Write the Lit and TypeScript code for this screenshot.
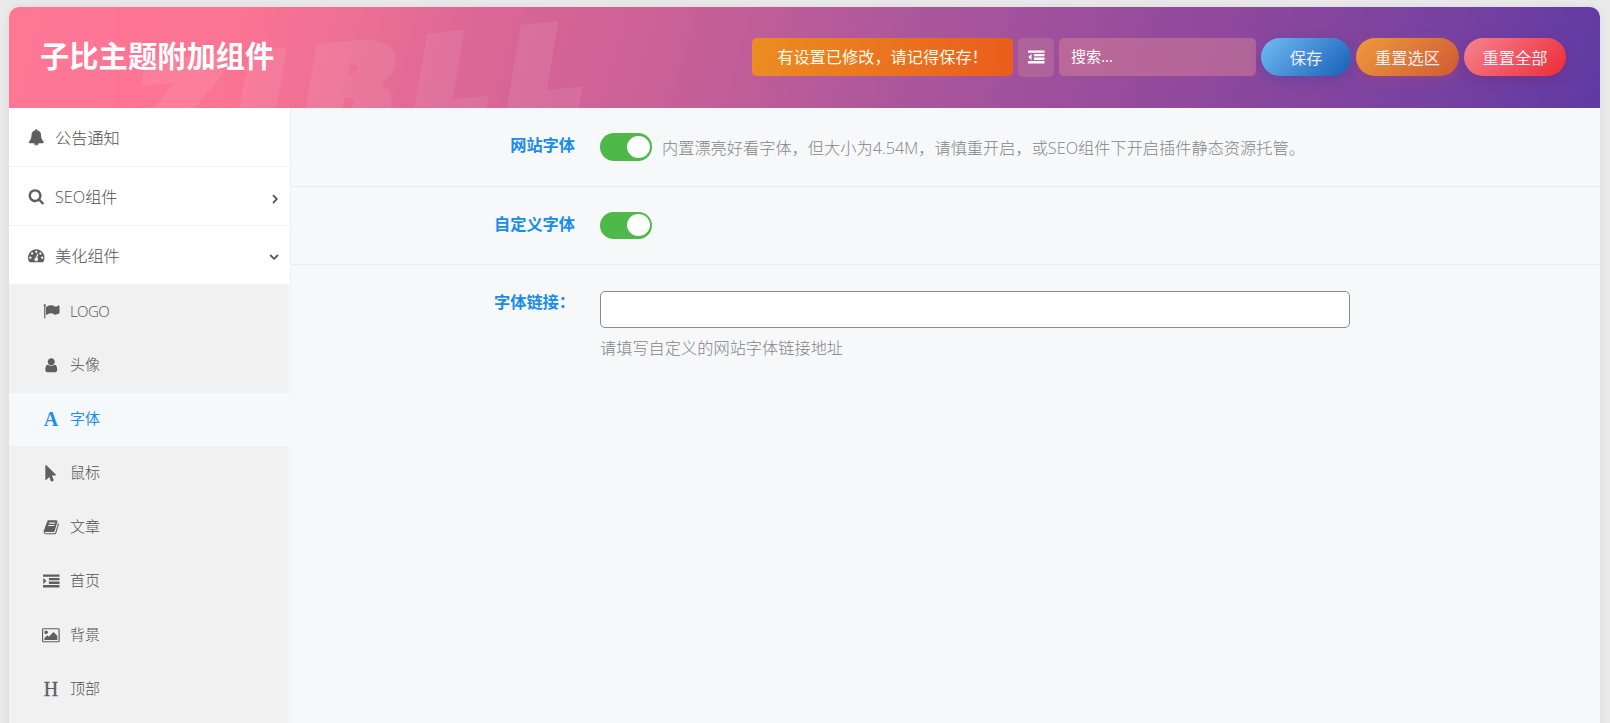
import { LitElement, html, svg, css, nothing } from "lit";
import { customElement, property } from "lit/decorators.js";

const paths: Record<string, string> = {
  bell: "M912 1696q0-16-16-16-59 0-101.5-42.5t-42.5-101.5q0-16-16-16t-16 16q0 73 51.5 124.5t124.5 51.5q16 0 16-16zm816-288q0 52-38 90t-90 38h-448q0 106-75 181t-181 75-181-75-75-181h-448q-52 0-90-38t-38-90q50-42 91-88t85-119.5 74.5-158.5 50-206 19.5-260q0-152 117-282.5t307-158.5q-8-19-8-39 0-40 28-68t68-28 68 28 28 68q0 20-8 39 190 28 307 158.5t117 282.5q0 139 19.5 260t50 206 74.5 158.5 85 119.5 91 88z",
  search: "M1216 832q0-185-131.5-316.5t-316.5-131.5-316.5 131.5-131.5 316.5 131.5 316.5 316.5 131.5 316.5-131.5 131.5-316.5zm512 832q0 52-38 90t-90 38q-54 0-90-38l-343-342q-179 124-399 124-143 0-273.5-55.5t-225-150-150-225-55.5-273.5 55.5-273.5 150-225 225-150 273.5-55.5 273.5 55.5 225 150 150 225 55.5 273.5q0 220-124 399l343 343q37 37 37 90z",
  gauge: "M384 1152q0-53-37.5-90.5t-90.5-37.5-90.5 37.5-37.5 90.5 37.5 90.5 90.5 37.5 90.5-37.5 37.5-90.5zm192-448q0-53-37.5-90.5t-90.5-37.5-90.5 37.5-37.5 90.5 37.5 90.5 90.5 37.5 90.5-37.5 37.5-90.5zm428 481l101-382q6-26-7.5-48.5t-38.5-29.5-48 6.5-30 39.5l-101 382q-60 5-107 43.5t-63 98.5q-20 77 20 146t117 89 146-20 89-117q16-60-6-117t-72-91zm660-33q0-53-37.5-90.5t-90.5-37.5-90.5 37.5-37.5 90.5 37.5 90.5 90.5 37.5 90.5-37.5 37.5-90.5zm-640-640q0-53-37.5-90.5t-90.5-37.5-90.5 37.5-37.5 90.5 37.5 90.5 90.5 37.5 90.5-37.5 37.5-90.5zm448 192q0-53-37.5-90.5t-90.5-37.5-90.5 37.5-37.5 90.5 37.5 90.5 90.5 37.5 90.5-37.5 37.5-90.5zm320 448q0 261-141 483-19 29-54 29h-1402q-35 0-54-29-141-221-141-483 0-182 71-348t191-286 286-191 348-71 348 71 286 191 191 286 71 348z",
  flag: "M320 256q0 72-64 110v1266q0 13-9.5 22.5t-22.5 9.5h-64q-13 0-22.5-9.5t-9.5-22.5v-1266q-64-38-64-110 0-53 37.5-90.5t90.5-37.5 90.5 37.5 37.5 90.5zm1472 64v763q0 25-12.5 38.5t-39.5 27.5q-215 116-369 116-61 0-123.5-22t-108.5-48-115.5-48-142.5-22q-192 0-464 146-17 9-33 9-26 0-45-19t-19-45v-742q0-32 31-55 21-14 79-43 236-120 421-120 107 0 200 29t219 88q38 19 88 19 54 0 117.5-21t110-47 88-47 54.5-21q26 0 45 19t19 45z",
  user: "M1536 1399q0 109-62.5 187t-150.5 78h-854q-88 0-150.5-78t-62.5-187q0-85 8.5-160.5t31.5-152 58.5-131 94-89 134.5-34.5q131 128 313 128t313-128q76 0 134.5 34.5t94 89 58.5 131 31.5 152 8.5 160.5zm-256-887q0 159-112.5 271.5t-271.5 112.5-271.5-112.5-112.5-271.5 112.5-271.5 271.5-112.5 271.5 112.5 112.5 271.5z",
  pointer: "M1389 1043q31 30 14 69-17 40-59 40h-382l201 476q10 25 0 49t-34 35l-177 75q-25 10-49 0t-35-34l-191-452-312 312q-19 19-45 19-12 0-24-5-40-17-40-59v-1504q0-42 40-59 12-5 24-5 27 0 45 19z",
  book: "M1703 478q40 57 18 129l-275 906q-19 64-76.5 107.5t-122.5 43.5h-923q-77 0-148.5-53.5t-99.5-131.5q-24-67-2-127 0-4 3-27t4-37q1-8-3-21.5t-3-19.5q2-11 8-21t16.5-23.5 16.5-23.5q23-38 45-91.5t30-91.5q3-10 .5-30t-.5-28q3-11 17-28t17-23q21-36 42-92t25-90q1-9-2.5-32t.5-28q4-13 22-30.5t22-22.5q19-26 42.5-84.5t27.5-96.5q1-8-3-25.5t-2-26.5q2-8 9-18t18-23 17-21q8-12 16.5-30.5t15-35 16-36 19.5-32 26.5-23.5 36-11.5 47.5 5.5l-1 3q38-9 51-9h761q74 0 114 56t18 130l-274 906q-36 119-71.5 153.5t-128.5 34.5h-869q-27 0-38 15-11 16-1 43 24 70 144 70h923q29 0 56-15.5t35-41.5l300-987q7-22 5-57 38 15 59 43zm-1064 2q-4 13 2 22.5t20 9.5h608q13 0 25.5-9.5t16.5-22.5l21-64q4-13-2-22.5t-20-9.5h-608q-13 0-25.5 9.5t-16.5 22.5zm-83 256q-4 13 2 22.5t20 9.5h608q13 0 25.5-9.5t16.5-22.5l21-64q4-13-2-22.5t-20-9.5h-608q-13 0-25.5 9.5t-16.5 22.5z",
  indent: "M0 160h1792v256h-1792zM640 544h1152v256h-1152zM640 928h1152v256h-1152zM0 1312h1792v256h-1792zM32 544l352 320-352 320z",
  outdent: "M0 160h1792v256h-1792zM640 544h1152v256h-1152zM640 928h1152v256h-1152zM0 1312h1792v256h-1792zM384 512v704l-352-352z",
  image: "M576 576q0 80-56 136t-136 56-136-56-56-136 56-136 136-56 136 56 56 136zm1024 384v448h-1408v-192l320-320 160 160 512-512zm96-704h-1600q-13 0-22.5 9.5t-9.5 22.5v1216q0 13 9.5 22.5t22.5 9.5h1600q13 0 22.5-9.5t9.5-22.5v-1216q0-13-9.5-22.5t-22.5-9.5zm160 32v1216q0 66-47 113t-113 47h-1600q-66 0-113-47t-47-113v-1216q0-66 47-113t113-47h1600q66 0 113 47t47 113z",
};

@customElement("fa-icon")
class FaIcon extends LitElement {
  @property() name = "";
  static styles = css`
    :host { display: flex; align-items: center; justify-content: center; width: 18px; height: 18px; }
    svg { display: block; height: 16.5px; overflow: visible; fill: currentColor; }
    .letter { font: 20px/16px "Liberation Serif", serif; -webkit-text-stroke: 0.3px currentColor; }
    .bold { font-weight: 700; -webkit-text-stroke: 0; }
  `;
  render() {
    if (this.name === "A") return html`<span class="letter bold">A</span>`;
    if (this.name === "H") return html`<span class="letter">H</span>`;
    const box = this.name === "image" ? "-64 0 1920 1792" : "0 0 1792 1792";
    return html`<svg viewBox=${box}>${svg`<path d=${paths[this.name]}></path>`}</svg>`;
  }
}

const topItems = [
  { icon: "bell", text: "公告通知", arrow: "" },
  { icon: "search", text: "SEO组件", arrow: "M4 3.2l3.8 3.9-3.8 3.9" },
  { icon: "gauge", text: "美化组件", arrow: "M1.2 4l3.9 3.8 3.9-3.8" },
];
const subItems = [
  ["flag", "LOGO"], ["user", "头像"], ["A", "字体"], ["pointer", "鼠标"],
  ["book", "文章"], ["indent", "首页"], ["image", "背景"], ["H", "顶部"],
];

@customElement("app-root")
class AppRoot extends LitElement {
  static styles = css`
    * { box-sizing: border-box; }
    :host {
      display: block; height: 723px; overflow: hidden; padding: 7px 10px 0 9px;
      background: #eaeaea; color: #505050;
      font-family: "Open Sans", "Noto Sans CJK SC", sans-serif; font-size: 16.22px; font-weight: 300;
    }
    .panel { height: 730px; display: flex; flex-direction: column; border-radius: 10px 10px 0 0; overflow: hidden; background: #f6f8fa; }
    .wrap { border-radius: 10px 10px 0 0; box-shadow: 0 0 10px rgba(0,0,0,.07); }
    .head {
      position: relative; height: 101px; flex: none; display: flex; align-items: flex-start; justify-content: space-between;
      padding: 31px 34px 0 31px; overflow: hidden;
      background: linear-gradient(105deg, #fe7795 0%, #fc7594 14%, #ee7095 21%, #dc6895 29%, #c96097 42%, #ac579c 56%, #91499c 74%, #7641a1 90%, #5f3aa3 100%);
    }
    .mark {
      position: absolute; left: 132px; top: 35px; font-size: 121px; line-height: 124px; font-weight: 800; font-style: italic;
      letter-spacing: 10px; color: #fff; opacity: .07; -webkit-text-stroke: 6px #fff;
      transform: rotate(-5.5deg) scaleX(1.28); transform-origin: 0 100%; white-space: nowrap;
    }
    h1 { position: relative; margin: 0; font-size: 29.3px; line-height: 36px; font-weight: 700; color: #fff; }
    .tools { position: relative; display: flex; gap: 5px; color: #fff; line-height: 38px; font-weight: 400; }
    .notice { width: 261px; height: 38px; border-radius: 5px; text-align: center; white-space: nowrap; color: #fffbe8; background: linear-gradient(100deg, #ec8d22, #ea5c1c); }
    .square { width: 36px; height: 39px; border-radius: 5px; background: #b0629b; display: flex; align-items: center; justify-content: center; }
    .find { width: 197px; height: 38px; border-radius: 5px; padding-left: 12px; font-size: 15px; line-height: 37px; background: rgba(215,130,150,.5); }
    .btn { height: 38px; border-radius: 19px; text-align: center; line-height: 40px; font-size: 16.25px; color: #f5edf5; }
    .save { width: 90px; background: linear-gradient(135deg, #6db7f0 5%, #2068bd 90%); box-shadow: 0 4px 12px rgba(50,60,160,.35); }
    .part { width: 103px; background: linear-gradient(135deg, #ee9b3b, #cf5a35); box-shadow: 0 4px 12px rgba(180,70,110,.35); }
    .all { width: 102px; background: linear-gradient(135deg, #f68390, #ee3340 90%); box-shadow: 0 4px 12px rgba(110,40,110,.4); }
    .body { flex: 1; display: flex; }
    nav { width: 282px; background: #fff; border-right: 1px solid #eef0f2; }
    .top { height: 59px; display: flex; align-items: center; padding: 1px 11px 0 18px; border-bottom: 1px solid #f2f2f2; }
    .top fa-icon, .sub fa-icon { color: #5e5e5e; }
    .top span { margin-left: 10px; flex: 1; padding-bottom: 2px; }
    .arrow { width: 10px; height: 10px; overflow: visible; fill: none; stroke: #555; stroke-width: 1.8; }
    .top:nth-child(3) { height: 58px; border: 0; }
    .list { background: #f1f1f1; height: 440px; margin-right: 1px; }
    .sub { height: 54px; display: flex; align-items: center; padding-left: 33px; font-size: 15px; }
    .sub span { margin-left: 10px; padding-bottom: 3px; }
    .sub:first-child span { padding-bottom: 0; letter-spacing: -.6px; }
    .active { background: #f6f9fc; background-clip: padding-box; border-top: 1px solid #f1f1f1; margin-right: -2px; position: relative; }
    .active, .sub.active fa-icon { color: #1b8fee; }
    .sub.active { font-weight: 400; padding-bottom: 1px; }
    main { flex: 1; }
    .row { height: 79px; border-bottom: 1px solid #e9ecee; display: flex; padding-top: 25px; }
    .row:nth-child(2) { height: 78px; }
    .row:nth-child(3) { border: 0; height: auto; }
    .label { width: 284px; text-align: right; color: #198beb; font-weight: 700; line-height: 24px; margin: 0 25px 0 0; flex: none; }
    .switch { width: 52px; height: 28px; border-radius: 14px; background: #4eb848; padding: 3px 2px; display: flex; justify-content: flex-end; }
    .switch::after { content: ""; width: 23px; height: 22px; border-radius: 50%; background: #fff; }
    .row:nth-child(2) .switch { height: 27px; padding-top: 2px; }
    .note { margin-left: 10px; line-height: 30px; color: #858585; white-space: nowrap; }
    .input { width: 750px; height: 37px; border: 1px solid #888b90; border-radius: 5px; background: #fff; margin-top: 1px; }
    .help { line-height: 24px; margin-top: 8px; color: #858585; }
  `;
  render() {
    return html`<div class="wrap"><div class="panel">
      <header class="head">
        <div class="mark">ZIBLL</div>
        <h1>子比主题附加组件</h1>
        <div class="tools">
          <div class="notice">有设置已修改，请记得保存！</div>
          <div class="square"><fa-icon name="outdent"></fa-icon></div>
          <div class="find">搜索...</div>
          <div class="btn save">保存</div>
          <div class="btn part">重置选区</div>
          <div class="btn all">重置全部</div>
        </div>
      </header>
      <div class="body">
        <nav>
          ${topItems.map((t) => html`<div class="top"><fa-icon name=${t.icon}></fa-icon><span>${t.text}</span>
            ${t.arrow ? html`<svg class="arrow" viewBox="0 0 10 10"><path d=${t.arrow}></path></svg>` : nothing}</div>`)}
          <div class="list">
            ${subItems.map(([icon, text]) => html`<div class="sub ${icon === "A" ? "active" : ""}"><fa-icon name=${icon}></fa-icon><span>${text}</span></div>`)}
          </div>
        </nav>
        <main>
          <div class="row"><div class="label">网站字体</div><div class="switch"></div>
            <div class="note">内置漂亮好看字体，但大小为4.54M，请慎重开启，或SEO组件下开启插件静态资源托管。</div></div>
          <div class="row"><div class="label">自定义字体</div><div class="switch"></div></div>
          <div class="row"><div class="label">字体链接：</div>
            <div><div class="input"></div><div class="help">请填写自定义的网站字体链接地址</div></div></div>
        </main>
      </div>
    </div></div>`;
  }
}
